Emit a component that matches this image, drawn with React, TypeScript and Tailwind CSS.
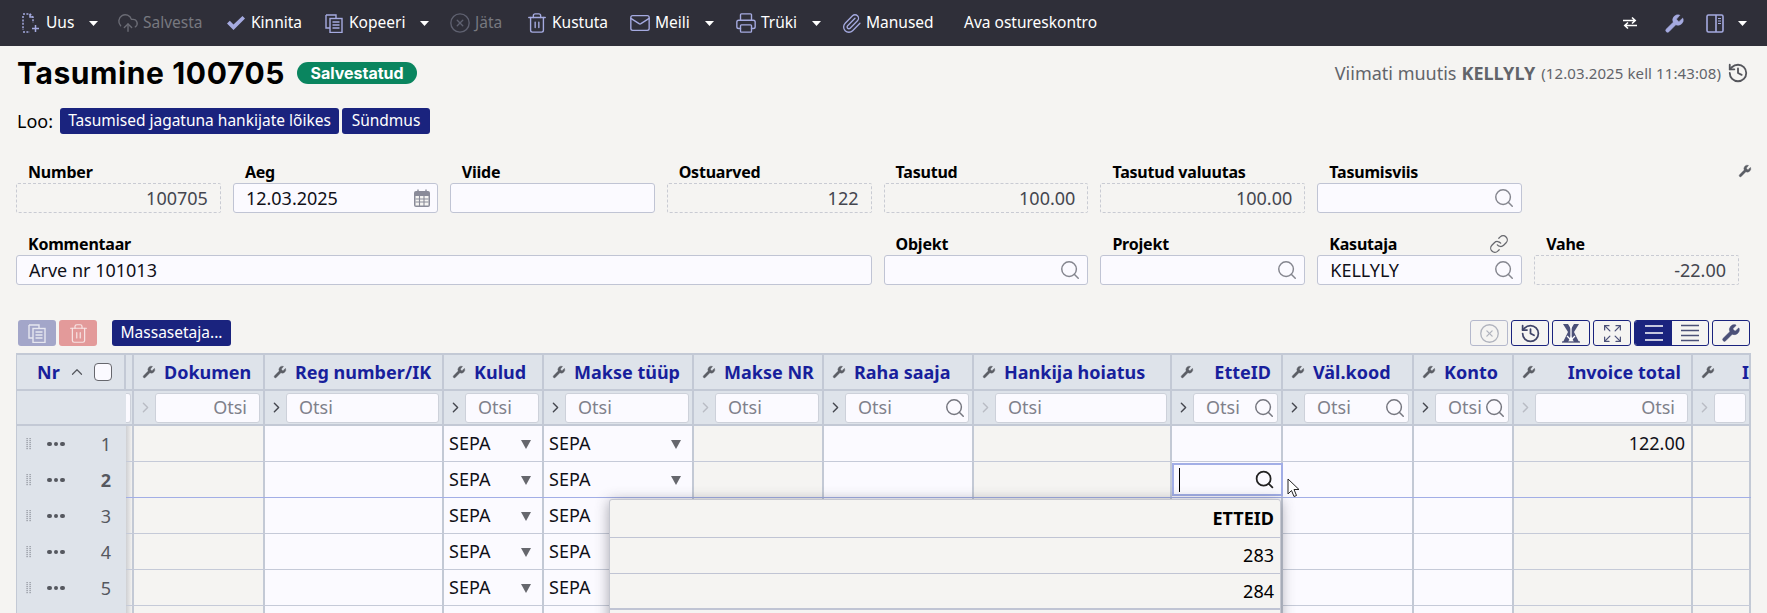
import { ChevronRight, ChevronUp, CircleX, CloudUpload, Expand, History, Link, Mail, Paperclip, Printer, Search, Trash2, Wrench } from "lucide-react";
import type { ReactNode } from "react";

const gridCols =
  "grid grid-cols-[109px_8px_131px_179px_100px_150px_130px_150px_198px_111px_131px_100px_179px_58px]";
const gridColsInner = "grid grid-cols-[8px_131px_179px_100px_150px_130px_150px_198px_111px_131px_100px_179px_58px]";

const Caret = ({ className = "" }: { className?: string }) => (
  <svg width="9" height="5" viewBox="0 0 9 5" className={className}>
    <path d="M0 0h9L4.5 5z" fill="#fff" />
  </svg>
);

const Spanner = ({ size = 14, className = "" }: { size?: number; className?: string }) => (
  <Wrench size={size} strokeWidth={0.6} fill="currentColor" className={`shrink-0 ${className}`} />
);

const NewDoc = () => (
  <svg width="18" height="20" viewBox="0 0 18 20" fill="none" stroke="#a5aae0" strokeWidth="1.5">
    <path d="M1 1h7l3 3v6M1 3v14M1 19h7" strokeDasharray="2 1.4" />
    <path d="M8 1v3h3M13.5 12v7M10 15.5h7" />
  </svg>
);

const CheckIcon = () => (
  <svg width="18" height="14" viewBox="0 0 18 14">
    <path d="M0 7.5 6.5 14 18 2.5 15.5 0 6.5 8.5 2.8 4.8z" fill="#a5aae0" />
  </svg>
);

const CopyIcon = ({ color = "#a5aae0" }: { color?: string }) => (
  <svg width="18" height="19" viewBox="0 0 18 19" fill="none" stroke={color} strokeWidth="1.4">
    <path d="M1 1h10v3M1 1v13h4" />
    <rect x="5" y="4.5" width="12" height="14" />
    <path d="M7.5 8h7M7.5 11h7M7.5 14h7" />
  </svg>
);

const PanelIcon = () => (
  <svg width="18" height="19" viewBox="0 0 18 19" fill="none" stroke="#a5aae0" strokeWidth="1.6">
    <rect x="1" y="1" width="16" height="17" rx="1.5" />
    <path d="M10 1v17" />
    <path d="M12 4.5h3M12 7h3M12 9.5h3" strokeWidth="1.2" />
  </svg>
);

const SwapIcon = () => (
  <svg width="14" height="14" viewBox="0 0 14 14" fill="none" stroke="#fff" strokeWidth="1.6">
    <path d="M0 4.5h12M9 1.5l3.2 3L9 7.5M14 9.5H2M5 6.5 1.8 9.5 5 12.5" />
  </svg>
);

const CalendarIcon = () => (
  <svg width="18" height="18" viewBox="0 0 18 18">
    <path d="M1 4a2 2 0 0 1 2-2h12a2 2 0 0 1 2 2v12a2 2 0 0 1-2 2H3a2 2 0 0 1-2-2z" fill="#8a8b99" />
    <path d="M2.5 7h13v9.5h-13z" fill="#f5f4f2" />
    <path d="M2.5 10h13M2.5 13h13M6.5 7v10M11 7v10" stroke="#8a8b99" strokeWidth="1.1" />
    <path d="M5 .5v3M13 .5v3" stroke="#8a8b99" strokeWidth="1.4" />
  </svg>
);

const ExcelIcon = () => (
  <svg width="20" height="20" viewBox="0 0 20 20">
    <path d="M2 1h5l3 5 3-5h5l-5 8 5 10h-5l-3-6-3 6H2l5-10z" fill="#4b5078" />
    <path d="M10 3v14M6 13l4 4 4-4" stroke="#fff" strokeWidth="1.3" fill="none" />
    <path d="M1 19h18" stroke="#4b5078" strokeWidth="1.3" />
  </svg>
);

const LinesIcon = ({ color, d }: { color: string; d: string }) => (
  <svg width="20" height="18" viewBox="0 0 20 18" fill="none" stroke={color} strokeWidth="1.5">
    <path d={d} />
  </svg>
);

const Grip = () => (
  <svg width="6" height="12" viewBox="0 0 6 12" fill="#8b8f98">
    {[0, 2, 4, 6, 8, 10].map((y) => (
      <g key={y}>
        <rect x="0.5" y={y} width="1.2" height="1.2" />
        <rect x="3.5" y={y} width="1.2" height="1.2" />
      </g>
    ))}
  </svg>
);

const Dots = () => (
  <span className="flex gap-[2px]">
    <span className="size-[4.5px] rounded-full bg-[#55585f]" />
    <span className="size-[4.5px] rounded-full bg-[#55585f]" />
    <span className="size-[4.5px] rounded-full bg-[#55585f]" />
  </span>
);

const ToolItem = ({
  icon,
  label,
  width,
  dim,
  caret,
}: {
  icon: ReactNode;
  label: string;
  width: string;
  dim?: boolean;
  caret?: boolean;
}) => (
  <div className={`flex items-center shrink-0 ${width}`}>
    <span className="w-[18px] h-5 flex items-center justify-center shrink-0">{icon}</span>
    <span className={`ml-[6px] ${dim ? "text-[#77787f]" : "text-white"}`}>{label}</span>
    {caret && <Caret className="ml-[15px]" />}
  </div>
);

const Field = ({
  label,
  children,
  span,
  extra,
}: {
  label: string;
  children: ReactNode;
  span?: string;
  extra?: ReactNode;
}) => (
  <div className={span ?? ""}>
    <div className="h-[24px] pt-[2px] pl-[12px] pr-[12px] flex items-center justify-between font-bold text-black text-[16px] tracking-[-0.2px]">
      {label}
      {extra}
    </div>
    {children}
  </div>
);

const ReadOnly = ({ value }: { value?: string }) => (
  <div className="h-[30px] rounded-[2px] border border-dashed border-[#c9cbd3] flex items-center justify-end pr-[12px] text-[#44464f] text-[18px]">
    {value}
  </div>
);

const Input = ({ value, icon }: { value?: string; icon?: ReactNode }) => (
  <div className="h-[30px] rounded-[3px] border border-[#c0c4d4] bg-[#fbfaff] flex items-center justify-between pl-[12px] pr-[6px] text-[#101018] text-[18px]">
    <span>{value}</span>
    {icon}
  </div>
);

const SearchGray = () => <Search size={22} strokeWidth={1.6} className="text-[#85868f]" />;

const HeadCell = ({ label, right, last }: { label?: string; right?: boolean; last?: boolean }) => (
  <div className="h-[36px] bg-[#dee3ea] border-r-2 border-b-2 border-[#c3c9d5] flex items-center pl-[8px] overflow-hidden whitespace-nowrap">
    <Spanner className="text-[#5b5e65]" />
    <span
      className={`font-bold text-[#181f9c] text-[18px] ${right ? "ml-auto pr-[10px]" : last ? "ml-[27px]" : "ml-[8px]"}`}
    >
      {label}
    </span>
  </div>
);

const FilterCell = ({
  dark,
  search,
  right,
  clip,
  empty,
}: {
  dark?: boolean;
  search?: boolean;
  right?: boolean;
  clip?: boolean;
  empty?: boolean;
}) => (
  <div className="h-[35px] bg-[#dee3ea] border-r-2 border-b-2 border-[#c3c9d5] flex items-center pl-[3px] pr-[3px] overflow-hidden">
    <ChevronRight
      size={17}
      strokeWidth={2}
      className={`shrink-0 ${dark ? "text-[#45474f]" : "text-[#b9bcc4]"}`}
    />
    <div
      className={`ml-[1px] h-[30px] min-w-0 flex-1 rounded-[3px] border border-[#cdd1da] bg-[#fbfaff] flex items-center text-[#7f818b] text-[18px] ${
        right ? "justify-end pr-[12px]" : "pl-[12px]"
      } relative ${clip ? "overflow-hidden" : ""}`}
    >
      {!empty && "Otsi"}
      {search && (
        <Search
          size={22}
          strokeWidth={1.6}
          className="absolute right-[2px] top-[3px] text-[#75767f] bg-[#fbfaff]"
        />
      )}
    </div>
  </div>
);

const Sepa = ({ blank }: { blank?: boolean }) => (
  <div className="h-full bg-[#fbfaff] border-r-2 border-[#c3c9d5] flex items-center justify-between pl-[5px] pr-[11px] text-[#101018] text-[18px]">
    {!blank && (
      <>
        SEPA
        <svg width="10" height="10" viewBox="0 0 10 10">
          <path d="M0 1h10L5 10z" fill="#66676d" />
        </svg>
      </>
    )}
  </div>
);

const Blank = ({ gray, children }: { gray?: boolean; children?: ReactNode }) => (
  <div
    className={`h-full border-r-2 border-[#c3c9d5] flex items-center justify-end pr-[6px] text-[#101018] text-[18px] ${
      gray ? "bg-[#f5f4f2]" : "bg-[#fbfaff]"
    }`}
  >
    {children}
  </div>
);

const Row = ({ n, active, blank }: { n: number; active?: boolean; blank?: boolean }) => (
  <div className={`${gridCols} h-[36px]`}>
    <div className="bg-[#dee3ea] flex items-center pl-[9px] pr-[15px] text-[#55585f] text-[18px]">
      {!blank && (
        <>
          <Grip />
          <span className="ml-[15px]">
            <Dots />
          </span>
          <span className={`ml-auto ${active ? "font-bold" : ""}`}>{n}</span>
        </>
      )}
    </div>
    <div
      className={`col-span-13 ${gridColsInner} relative border-b ${
        active ? "border-[#a2aee6]" : "border-[#c5cad8]"
      }`}
    >
      <div className="h-full bg-linear-to-r from-[#cfd0d3] to-[#f3f2f1] border-r-2 border-[#c3c9d5]" />
      <Blank gray />
      <Blank />
      <Sepa blank={blank} />
      <Sepa blank={blank} />
      <Blank gray />
      <Blank />
      <Blank gray />
      <Blank>
        {active && (
          <div className="flex-1 self-stretch -mr-[8px] my-[1px] border-2 border-[#a2aee6] bg-[#fbfaff] flex items-center justify-between pl-[5px] pr-[6px]">
            <span className="w-px h-[24px] bg-black" />
            <Search size={21} strokeWidth={2} className="text-[#222]" />
          </div>
        )}
      </Blank>
      <Blank />
      <Blank />
      <Blank gray>{n === 1 ? "122.00" : ""}</Blank>
      <Blank gray />
    </div>
  </div>
);

const SmallBtn = ({ children, className = "" }: { children: ReactNode; className?: string }) => (
  <div
    className={`h-[26px] w-[38px] rounded-[3px] border border-[#1a237e] flex items-center justify-center ${className}`}
  >
    {children}
  </div>
);

export default function App() {
  return (
    <div className="relative h-[613px] overflow-hidden bg-[#f5f4f2] font-['Noto_Sans',sans-serif] text-[15.5px]">
      {/* top toolbar */}
      <div className="h-[46px] bg-[#2f2f39] flex items-center pl-[22px] pr-[20px]">
        <ToolItem width="w-[97px]" label="Uus" icon={<NewDoc />} caret />
        <ToolItem
          width="w-[108px]"
          label="Salvesta"
          dim
          icon={<CloudUpload size={22} strokeWidth={1.5} className="shrink-0 text-[#6b6c75]" />}
        />
        <ToolItem width="w-[98px]" label="Kinnita" icon={<CheckIcon />} />
        <ToolItem width="w-[126px]" label="Kopeeri" icon={<CopyIcon />} caret />
        <ToolItem
          width="w-[77px]"
          label="Jäta"
          dim
          icon={<CircleX size={22} strokeWidth={1.5} className="shrink-0 text-[#5f6170]" />}
        />
        <ToolItem
          width="w-[103px]"
          label="Kustuta"
          icon={<Trash2 size={22} strokeWidth={1.5} className="shrink-0 text-[#a5aae0]" />}
        />
        <ToolItem
          width="w-[106px]"
          label="Meili"
          icon={<Mail size={22} strokeWidth={1.5} className="shrink-0 text-[#a5aae0]" />}
          caret
        />
        <ToolItem
          width="w-[105px]"
          label="Trüki"
          icon={<Printer size={22} strokeWidth={1.5} className="shrink-0 text-[#a5aae0]" />}
          caret
        />
        <ToolItem
          width="w-[122px]"
          label="Manused"
          icon={<Paperclip size={21} strokeWidth={1.5} className="shrink-0 text-[#a5aae0]" />}
        />
        <span className="text-white shrink-0">Ava ostureskontro</span>
        <div className="ml-auto flex items-center">
          <SwapIcon />
          <Spanner size={21} className="ml-[27px] text-[#a5aae0]" />
          <span className="ml-[21px]">
            <PanelIcon />
          </span>
          <Caret className="ml-[14px]" />
        </div>
      </div>

      {/* title */}
      <div className="flex items-center justify-between pl-[17px] pr-[18px] h-[54px]">
        <div className="flex items-center">
          <h1 className="font-['Inter',sans-serif] font-bold text-[30px] tracking-[0.6px] text-black">
            Tasumine 100705
          </h1>
          <span className="ml-[12px] h-[22px] w-[120px] rounded-full bg-[#0a855f] text-white font-['Inter',sans-serif] font-bold text-[16px] flex items-center justify-center">
            Salvestatud
          </span>
        </div>
        <div className="flex items-center text-[#62646a]">
          <span className="text-[18px]">Viimati muutis</span>
          <span className="ml-[5px] text-[18px] font-bold">KELLYLY</span>
          <span className="ml-[6px] text-[15px] tracking-[0.1px]">(12.03.2025 kell 11:43:08)</span>
          <History size={22} strokeWidth={2} className="ml-[6px] text-[#55565c]" />
        </div>
      </div>

      {/* create links */}
      <div className="flex items-center pl-[17px] h-[26px] mt-[8px] text-black text-[15.5px]">
        <span className="w-[43px] text-[18px]">Loo:</span>
        <span className="h-[26px] w-[279px] rounded-[3px] bg-[#1a237e] text-white flex items-center justify-center">
          Tasumised jagatuna hankijate lõikes
        </span>
        <span className="ml-[3px] h-[26px] w-[88px] rounded-[3px] bg-[#1a237e] text-white flex items-center justify-center">
          Sündmus
        </span>
      </div>

      {/* form */}
      <div className="relative mt-[25px] ml-[16px] w-[1723px] grid grid-cols-8 gap-x-[12px] gap-y-[18px]">
        <Field label="Number">
          <ReadOnly value="100705" />
        </Field>
        <Field label="Aeg">
          <Input value="12.03.2025" icon={<CalendarIcon />} />
        </Field>
        <Field label="Viide">
          <Input />
        </Field>
        <Field label="Ostuarved">
          <ReadOnly value="122" />
        </Field>
        <Field label="Tasutud">
          <ReadOnly value="100.00" />
        </Field>
        <Field label="Tasutud valuutas">
          <ReadOnly value="100.00" />
        </Field>
        <Field label="Tasumisviis">
          <Input icon={<SearchGray />} />
        </Field>
        <div />
        <Field label="Kommentaar" span="col-span-4">
          <Input value="Arve nr 101013" />
        </Field>
        <Field label="Objekt">
          <Input icon={<SearchGray />} />
        </Field>
        <Field label="Projekt">
          <Input icon={<SearchGray />} />
        </Field>
        <Field
          label="Kasutaja"
          extra={<Link size={20} strokeWidth={1.5} className="text-[#66676d] mr-[1px]" />}
        >
          <Input value="KELLYLY" icon={<SearchGray />} />
        </Field>
        <Field label="Vahe">
          <ReadOnly value="-22.00" />
        </Field>
        <Spanner size={14} className="absolute right-[-13px] top-[5px] text-[#5b5e65]" />
      </div>

      {/* table actions */}
      <div className="flex items-center mt-[35px] pl-[18px] pr-[17px] h-[26px]">
        <div className="h-[26px] w-[38px] rounded-[3px] bg-[#a3a6c9] flex items-center justify-center">
          <CopyIcon color="#e6e7f0" />
        </div>
        <div className="ml-[3px] h-[26px] w-[38px] rounded-[3px] bg-[#e39a9a] flex items-center justify-center">
          <Trash2 size={21} strokeWidth={1.4} className="text-[#f7e3e3]" />
        </div>
        <div className="ml-[15px] h-[26px] w-[119px] rounded-[3px] bg-[#1a237e] text-white text-[15.5px] flex items-center justify-center">
          Massasetaja...
        </div>
        <div className="ml-auto flex items-center gap-[3px]">
          <SmallBtn className="border-[#b4b8cc]">
            <CircleX size={21} strokeWidth={1.5} className="text-[#b0b3bd]" />
          </SmallBtn>
          <SmallBtn>
            <History size={21} strokeWidth={2} className="text-[#3f4468]" />
          </SmallBtn>
          <SmallBtn>
            <ExcelIcon />
          </SmallBtn>
          <SmallBtn>
            <Expand size={21} strokeWidth={1.4} className="text-[#4b5078]" />
          </SmallBtn>
          <div className="h-[26px] w-[75px] rounded-[3px] border border-[#1a237e] flex overflow-hidden">
            <div className="w-[37px] bg-[#1a237e] flex items-center justify-center">
              <LinesIcon color="#fff" d="M1 2h18M1 9h18M1 16h18" />
            </div>
            <div className="flex-1 flex items-center justify-center">
              <LinesIcon color="#4b5078" d="M1 1.5h18M1 6.5h18M1 11.5h18M1 16.5h18" />
            </div>
          </div>
          <SmallBtn>
            <Spanner size={20} className="text-[#4b5078]" />
          </SmallBtn>
        </div>
      </div>

      {/* table */}
      <div className="relative mt-[7px] ml-[16px] w-[1735px] border-l border-t-2 border-[#c3c9d5]">
        <div className={gridCols}>
          <div className="h-[36px] bg-[#dee3ea] border-r-2 border-b-2 border-[#c3c9d5] flex items-center pl-[20px] pr-[12px]">
            <span className="font-bold text-[#181f9c] text-[18px]">Nr</span>
            <ChevronUp size={18} strokeWidth={1.6} className="ml-[8px] text-[#55585f]" />
            <span className="ml-auto size-[18px] rounded-[4px] border-[1.5px] border-[#66676d] bg-[#fbfaff]" />
          </div>
          <div className="h-[36px] bg-[#dee3ea] border-r-2 border-b-2 border-[#c3c9d5]" />
          <HeadCell label="Dokumen" />
          <HeadCell label="Reg number/IK" />
          <HeadCell label="Kulud" />
          <HeadCell label="Makse tüüp" />
          <HeadCell label="Makse NR" />
          <HeadCell label="Raha saaja" />
          <HeadCell label="Hankija hoiatus" />
          <HeadCell label="EtteID" right />
          <HeadCell label="Väl.kood" />
          <HeadCell label="Konto" />
          <HeadCell label="Invoice total" right />
          <HeadCell label="Invoice" last />

          <div className="h-[35px] bg-[#dee3ea] border-b-2 border-[#c3c9d5]" />
          <div className="h-[35px] bg-[#dee3ea] border-r-2 border-b-2 border-[#c3c9d5] flex items-center">
            <span className="h-[30px] w-[5px] rounded-r-[3px] bg-[#fbfaff] border border-l-0 border-[#cdd1da]" />
          </div>
          <FilterCell right />
          <FilterCell dark />
          <FilterCell dark />
          <FilterCell dark />
          <FilterCell />
          <FilterCell dark search />
          <FilterCell />
          <FilterCell dark search />
          <FilterCell dark search />
          <FilterCell dark search clip />
          <FilterCell right />
          <FilterCell empty />
        </div>
        <Row n={1} />
        <Row n={2} active />
        <Row n={3} />
        <Row n={4} />
        <Row n={5} />
        <Row n={6} blank />

        {/* ETTEID dropdown */}
        <div className="absolute left-[592px] top-[144px] w-[672px] bg-[#f5f4f2] rounded-t-[3px] border border-[#c5c7d0] shadow-[0_2px_14px_rgba(60,60,70,0.45)] text-[18px] text-black">
          <div className="h-[38px] flex items-center justify-end pr-[6px] font-bold border-b border-[#c0c4d4]">
            ETTEID
          </div>
          <div className="h-[36px] flex items-center justify-end pr-[6px] border-b border-[#c0c4d4]">283</div>
          <div className="h-[36px] flex items-center justify-end pr-[6px] border-b-2 border-[#c0c4d4]">284</div>
          <div className="h-[36px]" />
        </div>

        {/* mouse pointer */}
        <svg width="14" height="20" viewBox="0 0 14 20" className="absolute left-[1270px] top-[123px]">
          <path d="M1 1v15l3.5-3.5 2.5 6 2.5-1-2.5-6H12z" fill="#fff" stroke="#222" strokeWidth="1" />
        </svg>
      </div>
    </div>
  );
}
